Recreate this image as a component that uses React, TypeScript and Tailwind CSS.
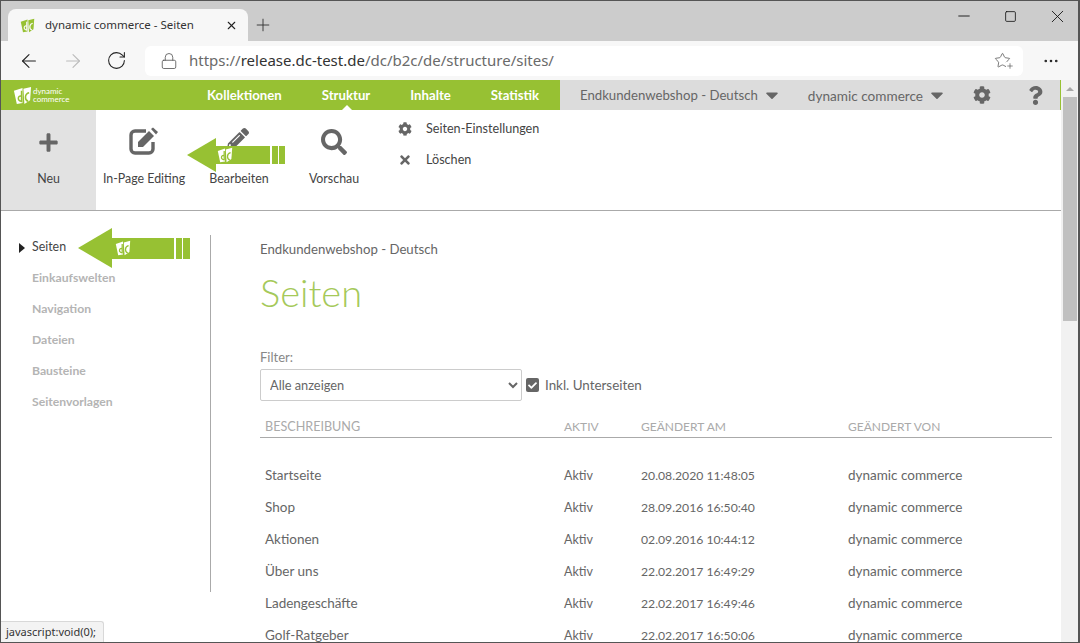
import { ArrowLeft, ArrowRight, Lock, Minus, MoreHorizontal, Plus, RotateCw, Square, Star, X } from 'lucide-react';
import { FaCaretDown, FaCheck, FaCog, FaPencilAlt, FaPlus, FaQuestion, FaSearch, FaTimes } from 'react-icons/fa';

const pages = [
  ['Startseite', 'Aktiv', '20.08.2020 11:48:05', 'dynamic commerce'],
  ['Shop', 'Aktiv', '28.09.2016 16:50:40', 'dynamic commerce'],
  ['Aktionen', 'Aktiv', '02.09.2016 10:44:12', 'dynamic commerce'],
  ['Über uns', 'Aktiv', '22.02.2017 16:49:29', 'dynamic commerce'],
  ['Ladengeschäfte', 'Aktiv', '22.02.2017 16:49:46', 'dynamic commerce'],
  ['Golf-Ratgeber', 'Aktiv', '22.02.2017 16:50:06', 'dynamic commerce'],
];

const sideItems = ['Einkaufswelten', 'Navigation', 'Dateien', 'Bausteine', 'Seitenvorlagen'];

// the two leaves of the dc logo
const DcMark = ({ color, cut, size }: { color: string; cut: string; size: number }) => (
  <svg width={size} height={size} viewBox="0 0 20 20">
    <path d="M1 5 L10 2 L10 18 L4 19 Z" fill={color} />
    <path d="M11 3 L19 1 L18 15 L12 19 Z" fill={color} />
    <path d="M9 5 L9 17 M9 11 C5 9 4 16 9 16" fill="none" stroke={cut} strokeWidth="1.6" />
    <path d="M17 7 C12 8 12 15 16 16" fill="none" stroke={cut} strokeWidth="1.6" />
  </svg>
);

const GreenArrow = ({ className, head, tail, logoGap, lastGap }: { className: string; head: string; tail: string; logoGap: string; lastGap: string }) => (
  <div className={`absolute flex items-center ${className}`}>
    <div className={`h-0 w-0 border-y-transparent border-r-[#97c133] ${head}`} />
    <div className={`flex items-center bg-[#97c133] ${tail}`}>
      <div className={logoGap}>
        <DcMark color="#ffffff" cut="#97c133" size={16} />
      </div>
      <div className="ml-auto mr-[6px] h-full w-[2px] bg-white" />
      <div className={`h-full w-[1px] bg-white ${lastGap}`} />
    </div>
  </div>
);

const RibbonButton = ({ icon, label, width }: { icon: React.ReactNode; label: string; width: string }) => (
  <div className={`flex flex-col items-center pt-[16px] ${width}`}>
    <div className="flex h-[32px] items-center text-[#666666]">{icon}</div>
    <div className="mt-[12px] whitespace-nowrap text-[12.4px] leading-[18px] text-[#444444]">{label}</div>
  </div>
);

// square with a pencil, heavier than the icon packages draw it
const EditIcon = () => (
  <svg width="30" height="28" viewBox="0 0 30 28" fill="none" className="-translate-y-[1px]">
    <path d="M17 4 H6 a4 4 0 0 0 -4 4 V22 a4 4 0 0 0 4 4 H20 a4 4 0 0 0 4 -4 V15" stroke="currentColor" strokeWidth="3.4" />
    <path d="M9 15 L20 4 L25 9 L14 20 H9 Z" fill="currentColor" />
    <path d="M22 2 L24 0.5 L29 5 L27 7.5 Z" fill="currentColor" />
  </svg>
);

export default function App() {
  return (
    <div className="relative flex h-[643px] w-[1080px] flex-col overflow-hidden border border-r-2 border-[#555555] bg-white font-['Lato',sans-serif]">
      {/* tab strip */}
      <div className="flex h-[40px] shrink-0 items-end bg-[#cccccc] pl-[7px] font-['Noto_Sans',sans-serif]">
        <div className="flex h-[32px] w-[240px] items-center rounded-t-lg bg-[#f7f7f7] pl-[12px] pr-[10px]">
          <DcMark color="#97c133" cut="#f7f7f7" size={15} />
          <span className="ml-[10px] text-[11.5px] text-[#333333]">dynamic commerce - Seiten</span>
          <X size={13} strokeWidth={2} className="ml-auto text-[#222222]" />
        </div>
        <div className="ml-[3px] flex h-[32px] w-[24px] items-center justify-center text-[#333333]">
          <Plus size={20} strokeWidth={1.1} />
        </div>
        <div className="mb-[9px] ml-auto mr-[-3px] flex h-[32px] items-center text-[#111111]">
          <div className="flex w-[47px] justify-center">
            <Minus size={18} strokeWidth={1.2} />
          </div>
          <div className="flex w-[47px] justify-center">
            <Square size={13} strokeWidth={1.5} />
          </div>
          <div className="flex w-[47px] justify-center">
            <X size={21} strokeWidth={1} />
          </div>
        </div>
      </div>

      {/* address bar */}
      <div className="flex h-[39px] shrink-0 items-center bg-[#f7f7f7] pl-[17px] font-['Noto_Sans',sans-serif]">
        <ArrowLeft size={22} strokeWidth={1.2} className="text-[#222222]" />
        <ArrowRight size={22} strokeWidth={1.2} className="ml-[22px] text-[#bbbbbb]" />
        <RotateCw size={21} strokeWidth={1.2} className="ml-[22px] text-[#222222]" />
        <div className="ml-[18px] flex h-[30px] w-[878px] items-center rounded-md bg-white pl-[15px] pr-[12px]">
          <Lock size={18} strokeWidth={1.1} className="text-[#555555]" />
          <span className="ml-[11px] text-[15px] text-[#6a6a6a]">
            https://<span className="text-[#333333]">release.dc-test.de</span>/dc/b2c/de/structure/sites/
          </span>
          <div className="relative ml-auto">
            <Star size={17} strokeWidth={1.1} className="text-[#555555]" />
            <Plus size={8} strokeWidth={2} className="absolute bottom-[-1px] right-[-3px] bg-white text-[#555555]" />
          </div>
        </div>
        <MoreHorizontal size={18} strokeWidth={1.5} className="ml-[19px] text-[#222222]" />
      </div>

      <div className="flex min-h-0 flex-1">
        <div className="relative min-w-0 flex-1">
          {/* green nav */}
          <div className="relative flex h-[30px] items-center bg-[#97c133]">
            <div className="flex w-[206px] items-center pl-[12px] text-white">
              <DcMark color="#ffffff" cut="#97c133" size={19} />
              <div className="ml-[1px] text-[8px] leading-[8px]">
                dynamic
                <br />
                commerce
              </div>
            </div>
            <div className="flex gap-[40px] pt-[2px] text-[13.2px] font-bold text-white">
              <span>Kollektionen</span>
              <span>Struktur</span>
              <span>Inhalte</span>
              <span>Statistik</span>
            </div>
            <div className="absolute bottom-0 left-[341px] h-0 w-0 border-x-[5px] border-b-[5px] border-x-transparent border-b-white" />
            <div className="ml-auto flex h-full w-[501px] items-center whitespace-nowrap border-r border-[#97c133] bg-[#dcdcdc] pl-[20px] text-[13.2px] text-[#666666]">
              <span className="pt-[2px]">Endkundenwebshop - Deutsch</span>
              <FaCaretDown size={20} className="ml-[4px]" />
              <span className="ml-[26px] pt-[2px] text-[13.6px]">dynamic commerce</span>
              <FaCaretDown size={20} className="ml-[4px]" />
              <FaCog size={18} className="ml-[26px]" />
              <FaQuestion size={19} className="ml-[35px]" />
            </div>
          </div>

          {/* ribbon */}
          <div className="relative flex h-[101px] border-b border-[#aaaaaa]">
            <RibbonButton icon={<FaPlus size={21} />} label="Neu" width="w-[95px] bg-[#e2e2e2]" />
            <RibbonButton icon={<EditIcon />} label="In-Page Editing" width="w-[96px]" />
            <RibbonButton icon={<FaPencilAlt size={22} className="-translate-x-[1px] -translate-y-[3px]" />} label="Bearbeiten" width="w-[94px]" />
            <RibbonButton icon={<FaSearch size={26} />} label="Vorschau" width="w-[96px]" />
            <div className="ml-[16px] flex flex-col gap-[13px] pt-[10px] text-[12.6px] leading-[18px] text-[#444444]">
              <div className="flex items-center">
                <FaCog size={14} className="text-[#666666]" />
                <span className="ml-[14px]">Seiten-Einstellungen</span>
              </div>
              <div className="flex items-center">
                <FaTimes size={14} className="text-[#666666]" />
                <span className="ml-[14px]">Löschen</span>
              </div>
            </div>
            <GreenArrow
              className="left-[186px] top-[28px]"
              head="border-y-[17px] border-r-[29px]"
              tail="h-[18px] w-[69px]"
              logoGap="ml-[1px]"
              lastGap="mr-[6px]"
            />
          </div>

          {/* body */}
          <div className="relative flex">
            <div className="mt-[24px] h-[357px] w-[210px] shrink-0 border-r border-[#aaaaaa] pl-[18px]">
              <div className="flex h-[22px] items-center pt-[3px] text-[12.4px] text-[#444444]">
                <div className="h-0 w-0 border-y-[5px] border-l-[6px] border-y-transparent border-l-[#222222]" />
                <span className="ml-[7px]">Seiten</span>
              </div>
              <div className="mt-[10px] flex flex-col gap-[9px] pl-[13px] text-[12.2px] font-bold text-[#b4b4b4]">
                {sideItems.map(item => (
                  <div key={item} className="h-[22px] leading-[22px]">
                    {item}
                  </div>
                ))}
              </div>
            </div>
            <GreenArrow
              className="left-[77px] top-[17px]"
              head="border-y-[20px] border-r-[34px]"
              tail="h-[21px] w-[78px]"
              logoGap="ml-[3px]"
              lastGap="mr-[7px]"
            />

            <div className="w-[841px] pl-[49px] pt-[29px]">
              <div className="text-[13.2px] leading-[18px] text-[#666666]">Endkundenwebshop - Deutsch</div>
              <h1 className="mt-[11px] text-[38px] font-light leading-[46px] text-[#a5c95a]">Seiten</h1>
              <div className="mt-[33px] text-[13px] leading-[18px] text-[#888888]">Filter:</div>
              <div className="mt-[3px] flex items-center">
                <select className="h-[32px] w-[262px] rounded-[2px] border border-[#cccccc] bg-white pl-[5px] text-[12.8px] text-[#666666]">
                  <option>Alle anzeigen</option>
                </select>
                <div className="ml-[4px] flex h-[14px] w-[13px] items-center justify-center rounded-[2px] bg-[#666666] text-white">
                  <FaCheck size={9} />
                </div>
                <span className="ml-[6px] text-[13.4px] text-[#666666]">Inkl. Unterseiten</span>
              </div>
              <table className="mt-[14px] w-full table-fixed text-left text-[13.5px] text-[#666666]">
                <thead>
                  <tr className="border-b border-[#aaaaaa] align-baseline text-[12px] leading-[20px] text-[#aaaaaa]">
                    <th className="h-[22px] w-[304px] pl-[5px] pt-[2px] text-[12.6px] font-normal">BESCHREIBUNG</th>
                    <th className="w-[77px] pt-[2px] font-normal">AKTIV</th>
                    <th className="w-[207px] pt-[2px] font-normal">GEÄNDERT AM</th>
                    <th className="pt-[2px] font-normal">GEÄNDERT VON</th>
                  </tr>
                  <tr>
                    <td colSpan={4} className="h-[22px]" />
                  </tr>
                </thead>
                <tbody>
                  {pages.map(row => (
                    <tr key={row[0]} className="h-[32px] align-baseline leading-[30px]">
                      <td className="pl-[5px]">{row[0]}</td>
                      <td className="text-[12.5px]">{row[1]}</td>
                      <td className="text-[12.2px]">{row[2]}</td>
                      <td>{row[3]}</td>
                    </tr>
                  ))}
                </tbody>
              </table>
            </div>
          </div>
        </div>

        {/* scrollbar */}
        <div className="flex w-[17px] shrink-0 flex-col items-center bg-[#f1f1f1]">
          <div className="mt-[7px] h-0 w-0 border-x-[4px] border-b-[4px] border-x-transparent border-b-[#a8a8a8]" />
          <div className="mt-[6px] h-[224px] w-[14px] bg-[#c0c0c0]" />
        </div>
      </div>

      {/* status bubble */}
      <div className="absolute bottom-0 left-0 flex h-[21px] items-center rounded-tr-[3px] border-r border-t border-[#d8d8d8] bg-[#f3f3f3] pl-[5px] pr-[7px] font-['Noto_Sans',sans-serif] text-[11px] text-[#333333]">
        javascript:void(0);
      </div>
    </div>
  );
}
